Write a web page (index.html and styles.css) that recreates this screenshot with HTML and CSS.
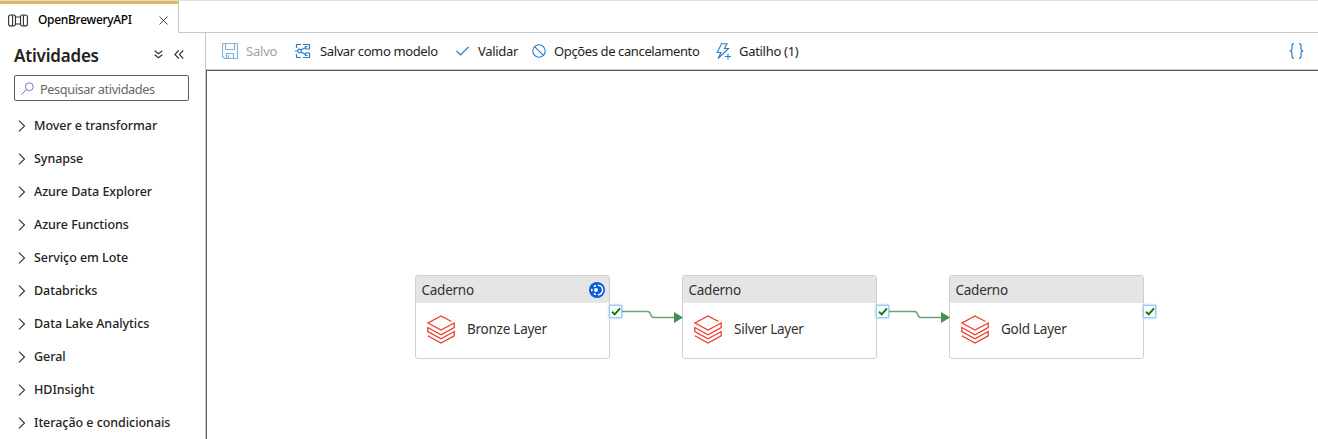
FILE: index.html
```html
<!DOCTYPE html>
<html lang="pt-BR">
<head>
<meta charset="utf-8">
<title>OpenBreweryAPI</title>
<link rel="stylesheet" href="styles.css">
</head>
<body>
<svg class="defs" width="0" height="0">
  <symbol id="chevron" viewBox="0 0 8 12"><path d="M1 .7 6.500 6 1 11.300" fill="none" stroke="#323130" stroke-width="1.1"/></symbol>
  <symbol id="bricks" viewBox="0 0 30 29"><path d="M25.500 6.500 15 1 2 8 15 15 28.200 8V12.500L15 19.700 1.800 12.500V16.500L15 23.700 28.200 16.500V20.800L15 28 1.800 20.800" fill="none" stroke="#ee3d2c" stroke-width="1.3"/></symbol>
  <symbol id="ok" viewBox="0 0 10 9"><path d="M1 4.700 3.700 7.400 9 1.400" fill="none" stroke="#107c10" stroke-width="2"/></symbol>
  <symbol id="link" viewBox="0 0 62 18"><path d="M0 5.500H25Q28 5.500 28.500 8T31 11.500H53" fill="none" stroke="#6ba577" stroke-width="1.4"/><path d="M52 6 61 11.500 52 17Z" fill="#43904f"/></symbol>
</svg>
<header class="tabs">
  <div class="tab">
    <svg class="tab-icon" width="20" height="13" viewBox="0 0 20 13" fill="none" stroke="#323130" stroke-width="1.1"><rect x=".6" y="1" width="4" height="11" rx="2"/><path d="M3.500 1H5.500Q7.500 1 7.500 3.500V9.500Q7.500 12 5.500 12H3.500M7.500 3H12.500M7.500 10H12.500M16.500 1H14.500Q12.500 1 12.500 3.500V9.500Q12.500 12 14.500 12H16.500"/><rect x="15.400" y="1" width="4" height="11" rx="2"/></svg>
    <span class="tab-name">OpenBreweryAPI</span>
    <svg class="tab-close" width="9" height="9" viewBox="0 0 9 9"><path d="M.5.5l8 8M8.500.5l-8 8" stroke="#484644"/></svg>
  </div>
  <div class="tab-rest"></div>
</header>
<div class="workspace">
  <aside class="sidebar">
    <div class="side-head">
      <h1>Atividades</h1>
      <svg width="9" height="9" viewBox="0 0 9 9" fill="none" stroke="#323130" stroke-width="1.100"><path d="M.7.700 4.500 3.800 8.300.700M.7 4.700 4.500 7.800 8.300 4.700"/></svg>
      <svg class="collapse" width="10" height="9" viewBox="0 0 10 9" fill="none" stroke="#323130" stroke-width="1.100"><path d="M4.700.500.900 4.500 4.700 8.500M9.200.500 5.400 4.500 9.200 8.500"/></svg>
    </div>
    <div class="search">
      <svg width="13" height="13" viewBox="0 0 13 13" fill="none" stroke="#6a74d8"><circle cx="8.300" cy="4.700" r="3.900"/><path d="M5.500 7.500.500 12.500"/></svg>
      <span>Pesquisar atividades</span>
    </div>
    <ul class="nav">
      <li><svg><use href="#chevron"/></svg><span>Mover e transformar</span></li>
      <li><svg><use href="#chevron"/></svg><span>Synapse</span></li>
      <li><svg><use href="#chevron"/></svg><span>Azure Data Explorer</span></li>
      <li><svg><use href="#chevron"/></svg><span>Azure Functions</span></li>
      <li><svg><use href="#chevron"/></svg><span>Serviço em Lote</span></li>
      <li><svg><use href="#chevron"/></svg><span>Databricks</span></li>
      <li><svg><use href="#chevron"/></svg><span>Data Lake Analytics</span></li>
      <li><svg><use href="#chevron"/></svg><span>Geral</span></li>
      <li><svg><use href="#chevron"/></svg><span>HDInsight</span></li>
      <li><svg><use href="#chevron"/></svg><span>Iteração e condicionais</span></li>
    </ul>
  </aside>
  <main class="main">
    <div class="toolbar">
      <div class="tool save"><svg width="16" height="16" viewBox="0 0 16 16" fill="none" stroke="#7fb4e2" stroke-width="1.2"><path d="M.5.500H15.500V15.500H2.500L.5 13.500ZM3.500.500V6.500H12.500V.500M4.500 15.500V10.500H11.500V15.500M6.500 12V15"/></svg><span>Salvo</span></div>
      <div class="tool template"><svg width="16" height="16" viewBox="0 0 16 16" fill="none" stroke="#2b7cc9" stroke-width="1.200"><path d="M6 1.500H1.500V5M1.500 11V14.500H6M8 1.500H14.500V6H10.500V3.500H12.500M8 14.500H14.500V10H10.500V12.500H12.500M6 7 10.500 4.500M6 9 10.500 11.500M0 8H2.500"/><circle cx="4.500" cy="8" r="1.800"/></svg><span>Salvar como modelo</span></div>
      <div class="tool validate"><svg width="13" height="10" viewBox="0 0 13 10" fill="none" stroke="#2b7cc9" stroke-width="1.200"><path d="M.5 5 4.500 9 12.500 1"/></svg><span>Validar</span></div>
      <div class="tool cancel"><svg width="14" height="14" viewBox="0 0 14 14" fill="none" stroke="#2b7cc9" stroke-width="1.100"><circle cx="7" cy="7" r="6.200"/><path d="M2.600 2.600 11.400 11.400"/></svg><span>Opções de cancelamento</span></div>
      <div class="tool trigger"><svg width="15" height="17" viewBox="0 0 15 17" fill="none" stroke="#2b7cc9" stroke-width="1.100"><path d="M5.500.700H11L8.500 5.500H12.500L2 15.500 5 9.500H1.200ZM9 13.500H15M12 10.500V16.500"/></svg><span>Gatilho (1)</span></div>
      <svg class="braces" width="15" height="16" viewBox="0 0 15 16" fill="none" stroke="#2b7cc9" stroke-width="1.200"><path d="M5 .700Q3 .700 3 2.700V5.500Q3 8 .700 8 3 8 3 10.500V13.300Q3 15.300 5 15.300M10 .700Q12 .700 12 2.700V5.500Q12 8 14.300 8 12 8 12 10.500V13.300Q12 15.300 10 15.300"/></svg>
    </div>
    <section class="canvas">
      <article class="node bronze">
        <div class="node-head"><span>Caderno</span>
          <svg class="state" width="16" height="16" viewBox="0 0 16 16"><circle cx="8" cy="8" r="8" fill="#0b5cdb"/><path d="M8.800 3.200A4.800 4.800 0 0 1 8.800 12.800M7 3.400A4.800 4.800 0 0 0 4.800 4.600M7 12.600A4.800 4.800 0 0 1 4.800 11.400M2.800 6.800V9.200" fill="none" stroke="#fff" stroke-width="1.500"/><circle cx="7" cy="8" r="2" fill="#fff"/></svg></div>
        <div class="node-body"><svg class="bricks"><use href="#bricks"/></svg><span>Bronze Layer</span></div>
        <div class="port"><svg><use href="#ok"/></svg></div>
        <svg class="link"><use href="#link"/></svg>
      </article>
      <article class="node silver">
        <div class="node-head"><span>Caderno</span></div>
        <div class="node-body"><svg class="bricks"><use href="#bricks"/></svg><span>Silver Layer</span></div>
        <div class="port"><svg><use href="#ok"/></svg></div>
        <svg class="link"><use href="#link"/></svg>
      </article>
      <article class="node gold">
        <div class="node-head"><span>Caderno</span></div>
        <div class="node-body"><svg class="bricks"><use href="#bricks"/></svg><span>Gold Layer</span></div>
        <div class="port"><svg><use href="#ok"/></svg></div>
      </article>
    </section>
  </main>
</div>
</body>
</html>
```
FILE: styles.css
```css
* { box-sizing: border-box; }
body { margin: 0; height: 439px; overflow: hidden; display: flex; flex-direction: column; background: #fff; color: #242322; font: 13px/18px "Noto Sans", "Open Sans", sans-serif; }
svg { display: block; flex: none; }
.defs { position: absolute; }
.tabs { display: flex; height: 33px; flex: none; border-top: 1px solid #dedede; }
.tab { width: 179px; display: flex; align-items: center; padding: 3px 10px 0 8px; border-top: 3px solid #e2b45b; border-right: 1px solid #c8c8c8; }
.tab-name { margin-left: 10px; width: 122px; font-size: 12px; font-weight: 500; letter-spacing: -0.3px; color: #000; white-space: nowrap; }
.tab-rest { flex: 1; border-bottom: 1px solid #c8c8c8; }
.workspace { display: flex; flex: 1; min-height: 0; }
.sidebar { width: 206px; flex: none; border-right: 1px solid #c8c8c8; white-space: nowrap; }
.side-head { display: flex; align-items: center; height: 43px; padding-left: 14px; }
h1 { margin: 3px 0 0; width: 140px; font-size: 17px; line-height: 24px; font-weight: 600; letter-spacing: -0.2px; }
.collapse { margin-left: 11px; }
.search { display: flex; align-items: center; width: 175px; height: 26px; margin: -1px 0 0 14px; padding: 1px 0 0 6px; border: 1px solid #605e5c; border-radius: 2px; color: #696765; font-size: 12.75px; letter-spacing: -0.4px; }
.search svg { margin-top: -1px; }
.search span { margin-left: 6px; }
.nav { list-style: none; margin: 8px 0 0; padding: 0; }
.nav li { display: flex; align-items: center; height: 33px; padding-left: 18px; font-weight: 500; font-size: 12.5px; letter-spacing: -0.05px; }
.nav svg { width: 8px; height: 12px; margin-right: 8px; }
.main { flex: 1; min-width: 0; display: flex; flex-direction: column; }
.toolbar { height: 37px; flex: none; display: flex; align-items: center; padding: 0 14px 0 16px; border-bottom: 1px solid #c8c8c8; white-space: nowrap; letter-spacing: -0.38px; }
.tool { display: flex; align-items: center; gap: 8px; }
.save { width: 73px; color: #a19f9d; letter-spacing: -0.2px; }
.template { width: 161px; gap: 9px; }
.validate { width: 76px; gap: 9px; letter-spacing: -0.3px; }
.cancel { width: 184px; }
.trigger { letter-spacing: -0.3px; }
.braces { margin-left: auto; }
.canvas { position: relative; flex: 1; border-top: 1px solid #605e5c; border-left: 1px solid #605e5c; }
.node { position: absolute; top: 204px; width: 195px; height: 84px; border: 1px solid #d0d0d0; border-radius: 3px; background: #fff; font-size: 13.5px; letter-spacing: -0.25px; color: #323130; }
.bronze { left: 208px; }
.silver { left: 475px; }
.gold { left: 742px; }
.node-head { height: 27px; display: flex; align-items: center; justify-content: space-between; padding: 0 4px 0 5.5px; background: #e5e5e5; border-radius: 2px 2px 0 0; }
.node-body { height: 55px; display: flex; align-items: center; padding: 0 0 3px 10px; gap: 11px; }
.bricks { width: 30px; height: 29px; }
.port { position: absolute; left: 193px; top: 29px; width: 13px; height: 13px; display: grid; place-items: center; background: #fff; border: 1px solid #9ccaf2; box-shadow: 0 0 2px #64aef0; }
.port svg { width: 10px; height: 9px; }
.link { position: absolute; left: 206px; top: 30px; width: 62px; height: 18px; z-index: 2; }
```
